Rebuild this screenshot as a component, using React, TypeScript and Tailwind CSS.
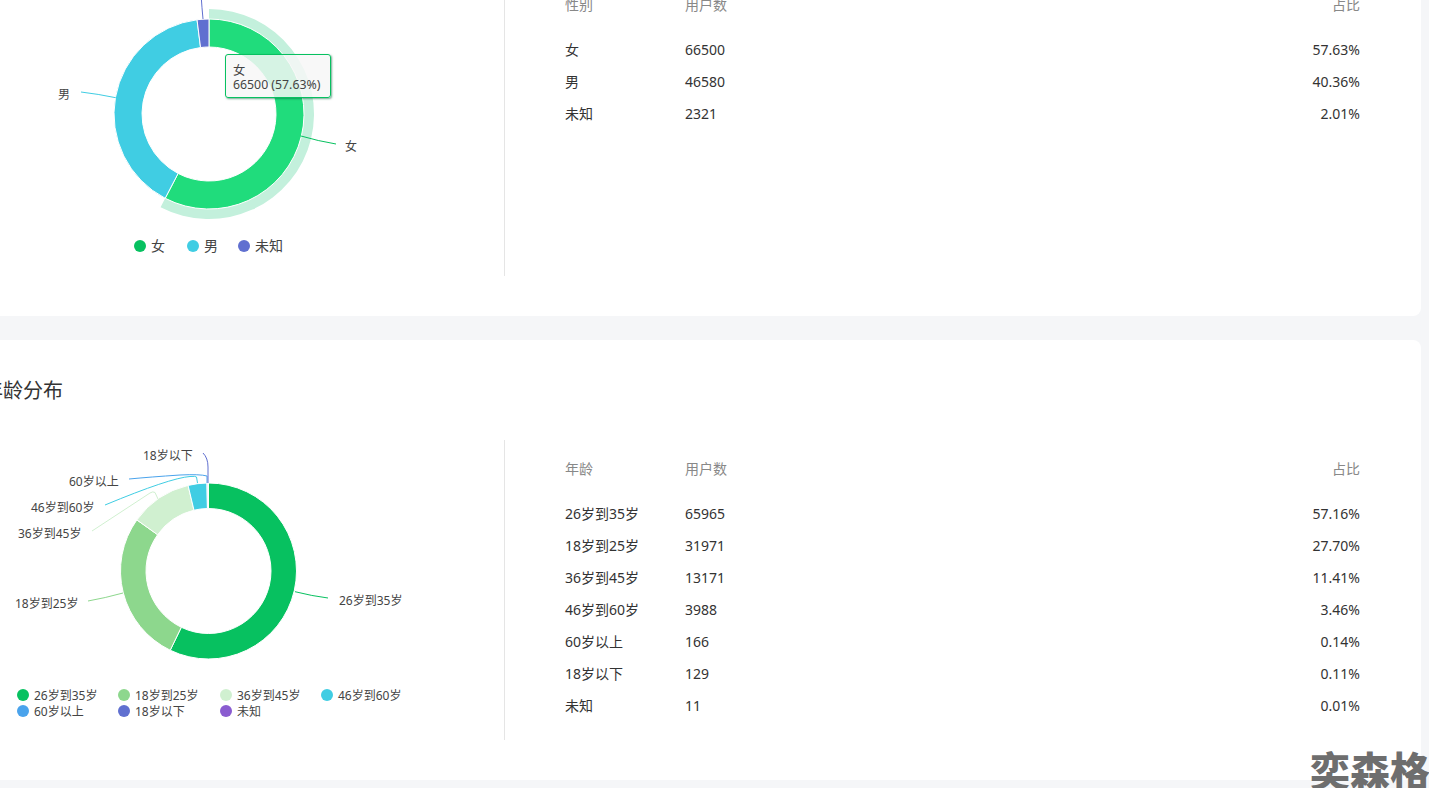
const fontStack = { fontFamily: '"Noto Sans", "Noto Sans CJK SC", sans-serif' }

type Row = { name: string; users: number; share: string }

const genderRows: Row[] = [
  { name: '女', users: 66500, share: '57.63%' },
  { name: '男', users: 46580, share: '40.36%' },
  { name: '未知', users: 2321, share: '2.01%' }
]

const ageRows: Row[] = [
  { name: '26岁到35岁', users: 65965, share: '57.16%' },
  { name: '18岁到25岁', users: 31971, share: '27.70%' },
  { name: '36岁到45岁', users: 13171, share: '11.41%' },
  { name: '46岁到60岁', users: 3988, share: '3.46%' },
  { name: '60岁以上', users: 166, share: '0.14%' },
  { name: '18岁以下', users: 129, share: '0.11%' },
  { name: '未知', users: 11, share: '0.01%' }
]

const point = (cx: number, cy: number, r: number, turn: number) => {
  const a = turn * Math.PI * 2 - Math.PI / 2
  return `${cx + r * Math.cos(a)} ${cy + r * Math.sin(a)}`
}

const arc = (cx: number, cy: number, r0: number, r1: number, from: number, to: number) => {
  const large = to - from > 0.5 ? 1 : 0
  return [
    `M${point(cx, cy, r1, from)}`,
    `A${r1} ${r1} 0 ${large} 1 ${point(cx, cy, r1, to)}`,
    `L${point(cx, cy, r0, to)}`,
    `A${r0} ${r0} 0 ${large} 0 ${point(cx, cy, r0, from)}`,
    'Z'
  ].join(' ')
}

const Donut = ({
  cx,
  cy,
  r0,
  r1,
  slices
}: {
  cx: number
  cy: number
  r0: number
  r1: number
  slices: { share: number; color: string }[]
}) => {
  let start = 0
  return (
    <g>
      {slices.map(s => {
        const from = start
        start += s.share / 100
        return (
          <path
            key={s.color}
            d={arc(cx, cy, r0, r1, from, start)}
            fill={s.color}
            stroke="#fff"
            strokeWidth="1"
          />
        )
      })}
    </g>
  )
}

const Legend = ({ x, y, color, label, size = 12 }: { x: number; y: number; color: string; label: string; size?: number }) => (
  <g>
    <circle cx={x} cy={y} r="6" fill={color} />
    <text x={x + 11} y={y + 4.5} fontSize={size} fill="#444">
      {label}
    </text>
  </g>
)

const Label = ({ x, y, children }: { x: number; y: number; children: string }) => (
  <text x={x} y={y + 4.5} fontSize="12" fill="#444">
    {children}
  </text>
)

const Lead = ({ d, color }: { d: string; color: string }) => <path d={d} fill="none" stroke={color} strokeWidth="1" />

const GenderChart = () => (
  <svg className="block w-[545px] h-[300px]" viewBox="-41 -24 545 300" style={fontStack}>
    <path d={arc(209, 114, 95, 105, 0, 0.5763)} fill="#c3f0dc" />
    <Donut
      cx={209}
      cy={114}
      r0={67}
      r1={95}
      slices={[
        { share: 57.63, color: '#20dc7c' },
        { share: 40.36, color: '#40cde3' },
        { share: 2.01, color: '#6070d0' }
      ]}
    />
    <Lead d="M301 136Q318 141 336 144" color="#07c160" />
    <Lead d="M115.7 97.7Q98 94 81 92" color="#40cde3" />
    <Lead d="M203 19Q202 9 201 -6" color="#6070d0" />
    <Label x={345} y={146}>女</Label>
    <Label x={58} y={94}>男</Label>
    <Legend x={140} y={246} color="#07c160" label="女" size={14} />
    <Legend x={193} y={246} color="#40cde3" label="男" size={14} />
    <Legend x={244} y={246} color="#6070d0" label="未知" size={14} />
  </svg>
)

const AgeChart = () => (
  <svg className="block w-[545px] h-[300px]" viewBox="-41 440 545 300" style={fontStack}>
    <Donut
      cx={208.5}
      cy={571}
      r0={62.5}
      r1={88}
      slices={[
        { share: 57.16, color: '#07c160' },
        { share: 27.7, color: '#8dd78d' },
        { share: 11.41, color: '#d0f0d0' },
        { share: 3.46, color: '#40cde3' },
        { share: 0.14, color: '#4aa3ec' },
        { share: 0.11, color: '#6070d0' },
        { share: 0.01, color: '#8a5cd0' }
      ]}
    />
    <Lead d="M295 591.7Q312 596 328 598" color="#07c160" />
    <Lead d="M123 593Q105 598 88 601" color="#8dd78d" />
    <Lead d="M158 499L155 492.5Q153 491 150 493L92 531" color="#d0f0d0" />
    <Lead d="M197.5 483L196.5 477Q196 476 190 476.5Q170 478 105 505" color="#40cde3" />
    <Lead d="M207 483L207 476Q200 474 180 475Q150 477 129 479" color="#4aa3ec" />
    <Lead d="M208 483L208 467Q208 458 203 453" color="#6070d0" />
    <Label x={339} y={600}>26岁到35岁</Label>
    <Label x={15} y={603}>18岁到25岁</Label>
    <Label x={18} y={533}>36岁到45岁</Label>
    <Label x={31} y={507}>46岁到60岁</Label>
    <Label x={69} y={481}>60岁以上</Label>
    <Label x={143} y={455}>18岁以下</Label>
    <Legend x={23} y={695} color="#07c160" label="26岁到35岁" />
    <Legend x={124} y={695} color="#8dd78d" label="18岁到25岁" />
    <Legend x={226} y={695} color="#d0f0d0" label="36岁到45岁" />
    <Legend x={327} y={695} color="#40cde3" label="46岁到60岁" />
    <Legend x={23} y={711} color="#4aa3ec" label="60岁以上" />
    <Legend x={124} y={711} color="#6070d0" label="18岁以下" />
    <Legend x={226} y={711} color="#8a5cd0" label="未知" />
  </svg>
)

const StatTable = ({ heading, rows }: { heading: string; rows: Row[] }) => (
  <div className="flex-1 pl-[60px] pt-4 text-sm">
    <div className="flex items-center h-[26px] mb-4 text-[#888]">
      <span className="w-[120px]">{heading}</span>
      <span className="flex-1">用户数</span>
      <span>占比</span>
    </div>
    {rows.map(row => (
      <div key={row.name} className="flex items-center h-8 text-[#333]">
        <span className="w-[120px]">{row.name}</span>
        <span className="flex-1">{row.users}</span>
        <span>{row.share}</span>
      </div>
    ))}
  </div>
)

const Card = ({
  title,
  heading,
  rows,
  chart
}: {
  title: string
  heading: string
  rows: Row[]
  chart: React.ReactNode
}) => (
  <section className="bg-white rounded-lg h-[440px] pr-[61px]">
    <h3 className="flex items-center h-[100px] pl-6 pt-[2px] text-xl font-normal text-[#333]">{title}</h3>
    <div className="flex h-[300px]">
      <div className="relative w-[546px] border-r border-[#e5e5e5]">{chart}</div>
      <StatTable heading={heading} rows={rows} />
    </div>
  </section>
)

export default function App() {
  return (
    <div className="relative h-[788px] overflow-hidden bg-[#f5f6f8]" style={fontStack}>
      <div className="flex flex-col gap-6 w-[1462px] -ml-[41px] -mt-[124px]">
        <Card
          title="性别分布"
          heading="性别"
          rows={genderRows}
          chart={
            <>
              <GenderChart />
              <div className="absolute left-[266px] top-[78px] w-[106px] h-[44px] pl-[7px] pt-[9px] rounded-[3px] border border-[#07c160] bg-[#f7f7f7]/85 shadow-[1px_1px_2px_rgba(7,100,60,0.55)] text-[12.3px] leading-[14px] text-[#444]">
                <div>女</div>
                <div>66500 (57.63%)</div>
              </div>
            </>
          }
        />
        <Card title="年龄分布" heading="年龄" rows={ageRows} chart={<AgeChart />} />
      </div>
      <div className="absolute right-0 bottom-[-5px] text-[40px] leading-[44px] font-black text-[#6e6e6e] whitespace-nowrap -mr-px">
        奕森格
      </div>
    </div>
  )
}
